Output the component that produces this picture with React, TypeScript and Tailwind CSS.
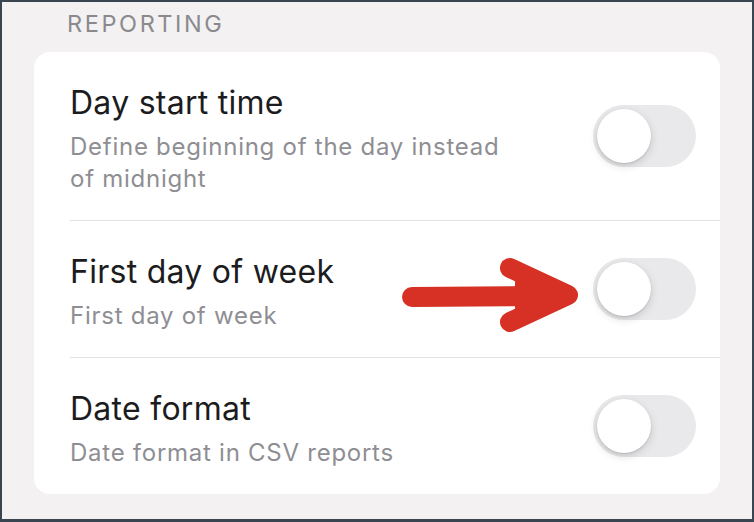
import React from "react";

function Toggle() {
  return (
    <div className="relative mb-[6px] h-[62px] w-[103px] shrink-0 rounded-full bg-[#e9e9eb]">
      <div className="absolute left-[4px] top-[4px] h-[54px] w-[54px] rounded-full bg-white shadow-[0_3px_8px_rgba(0,0,0,0.15),0_1px_2px_rgba(0,0,0,0.12)]" />
    </div>
  );
}

type RowProps = { title: string; sub: React.ReactNode; divider?: boolean };

function Row({ title, sub, divider }: RowProps) {
  return (
    <div
      className={
        "ml-[36px] flex items-center justify-between pr-[24px] pt-[31px] pb-[25px] " +
        (divider ? "border-b border-[#e3e3e6]" : "")
      }
    >
      <div className="flex flex-col">
        <div className="text-[32px] leading-[40px] tracking-[0.27px] text-[#1c1c1e]">{title}</div>
        <div className="mt-[8px] text-[24px] leading-[32px] tracking-[0.74px] text-[#8e8e93]">{sub}</div>
      </div>
      <Toggle />
    </div>
  );
}

export default function App() {
  return (
    <div
      className="h-[522px] w-[754px] bg-[#3a4552] pt-[2px] pl-[2px] pr-[2px] pb-[3px]"
      style={{ fontFamily: "Inter, 'Noto Sans', sans-serif" }}
    >
      <div className="relative flex h-full flex-col bg-[#f3f1f2] pl-[32px] pr-[32px] pt-[6px]">
        <div className="mb-[12px] pl-[33px] text-[23.5px] leading-[32px] tracking-[2.6px] text-[#8a8a8e]">REPORTING</div>
        <div className="flex flex-col rounded-[16px] bg-white">
          <Row
            title="Day start time"
            sub={
              <>
                Define beginning of the day instead
                <br />
                of midnight
              </>
            }
            divider
          />
          <Row title="First day of week" sub="First day of week" divider />
          <Row title="Date format" sub="Date format in CSV reports" />
        </div>
      </div>
      <svg
        className="pointer-events-none absolute left-0 top-0"
        width="754"
        height="522"
        viewBox="0 0 754 522"
      >
        <g fill="none" stroke="#d63124" strokeWidth="20" strokeLinecap="round" strokeLinejoin="round">
          <line x1="412" y1="297" x2="560" y2="296" />
          <polyline points="510,268 568,295 510,322" />
        </g>
        <polygon points="515,275 568,295 515,316" fill="#d63124" />
      </svg>
    </div>
  );
}
